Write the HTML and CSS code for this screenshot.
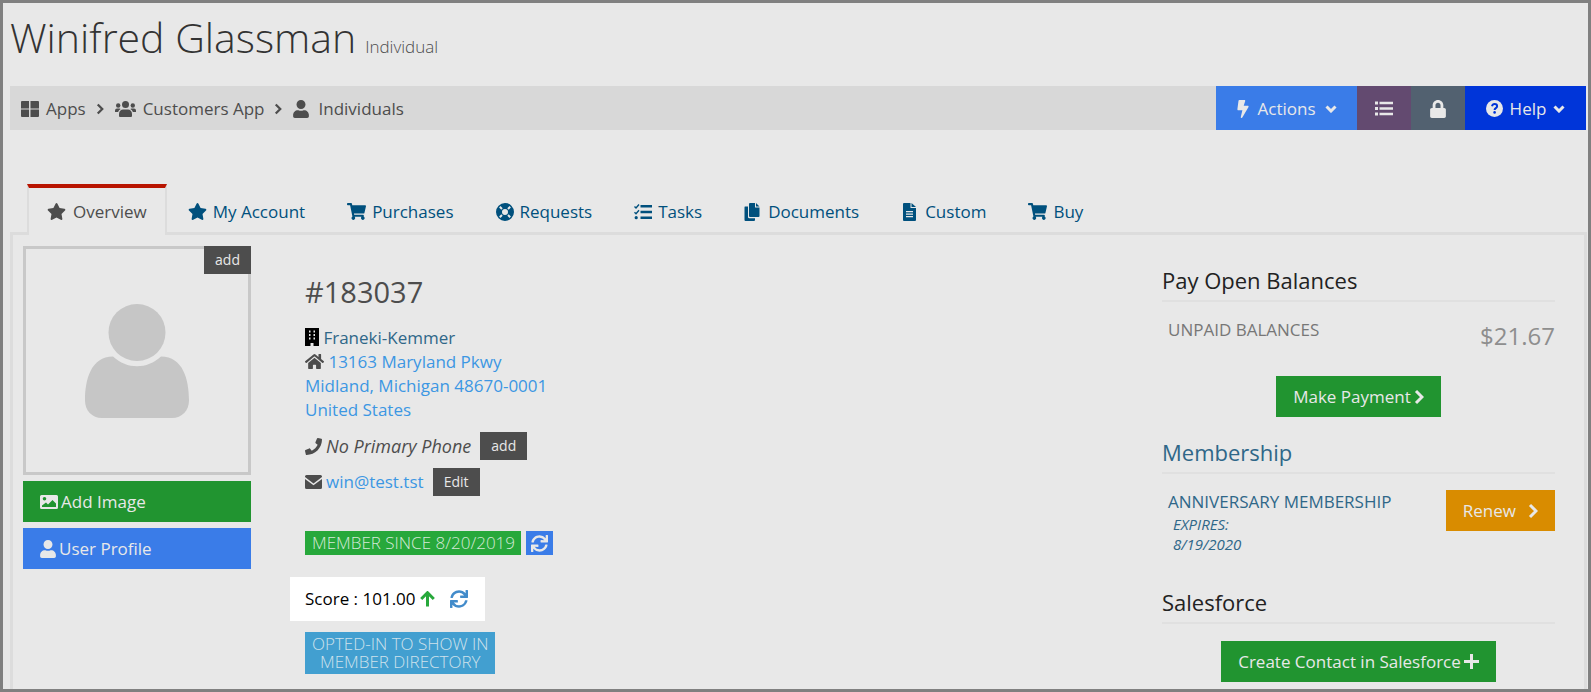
FILE: index.html
```html
<!DOCTYPE html>
<html lang="en">
<head>
  <meta charset="UTF-8">
  <meta name="viewport" content="width=device-width, initial-scale=1.0">
  <title>Winifred Glassman | Individual</title>
  <link rel="stylesheet" href="styles.css">
</head>
<body>

  <!-- icons used more than once -->
  <svg class="sprite" aria-hidden="true">
    <symbol id="star" viewBox="0 0 576 512"><path d="M259.3 17.8L194 150.2 47.9 171.5c-26.2 3.8-36.7 36.1-17.7 54.6l105.7 103-25 145.5c-4.5 26.3 23.2 46 46.4 33.7L288 439.6l130.7 68.7c23.2 12.2 50.9-7.4 46.4-33.7l-25-145.5 105.7-103c19-18.5 8.5-50.8-17.7-54.6L382 150.2 316.7 17.8c-11.7-23.6-45.6-23.9-57.4 0z"/></symbol>
    <symbol id="user" viewBox="0 0 448 512"><path d="M224 256c70.7 0 128-57.3 128-128S294.7 0 224 0 96 57.3 96 128s57.3 128 128 128zm89.6 32h-16.7c-22.2 10.2-46.9 16-72.9 16s-50.6-5.8-72.9-16h-16.7C60.2 288 0 348.2 0 422.4V464c0 26.5 21.5 48 48 48h352c26.5 0 48-21.5 48-48v-41.6c0-74.2-60.2-134.4-134.4-134.4z"/></symbol>
    <symbol id="cart" viewBox="0 0 576 512"><path d="M528.12 301.319l47.273-208C578.806 78.301 567.391 64 551.99 64H159.208l-9.166-44.81C147.758 8.021 137.93 0 126.529 0H24C10.745 0 0 10.745 0 24v16c0 13.255 10.745 24 24 24h69.883l70.248 343.435C147.325 417.1 136 435.222 136 456c0 30.928 25.072 56 56 56s56-25.072 56-56c0-15.674-6.447-29.835-16.824-40h209.647C430.447 426.165 424 440.326 424 456c0 30.928 25.072 56 56 56s56-25.072 56-56c0-22.172-12.888-41.332-31.579-50.405l5.517-24.276c3.413-15.018-8.002-29.319-23.403-29.319H218.117l-6.545-32h293.145c11.206 0 20.92-7.754 23.403-18.681z"/></symbol>
    <symbol id="sync" viewBox="0 0 512 512"><path d="M440.65 12.57l4 82.77A247.16 247.16 0 0 0 255.83 8C134.73 8 33.91 94.92 12.29 209.82A12 12 0 0 0 24.09 224h49.05a12 12 0 0 0 11.67-9.26 175.91 175.91 0 0 1 317-56.94l-101.46-4.86a12 12 0 0 0-12.57 12v47.41a12 12 0 0 0 12 12H500a12 12 0 0 0 12-12V12a12 12 0 0 0-12-12h-47.37a12 12 0 0 0-11.98 12.57zM255.83 432a175.61 175.61 0 0 1-146-77.8l101.8 4.87a12 12 0 0 0 12.57-12v-47.4a12 12 0 0 0-12-12H12a12 12 0 0 0-12 12V500a12 12 0 0 0 12 12h47.35a12 12 0 0 0 12-12.6l-4.15-82.57A247.17 247.17 0 0 0 255.83 504c121.11 0 221.93-86.92 243.55-201.82a12 12 0 0 0-11.8-14.18h-49.05a12 12 0 0 0-11.67 9.26A175.86 175.86 0 0 1 255.83 432z"/></symbol>
    <symbol id="right" viewBox="0 0 10 16"><path class="line" d="M2 2l6 6-6 6"/></symbol>
    <symbol id="down" viewBox="0 0 12 8"><path class="line" d="M1.5 1.5L6 6l4.500-4.500"/></symbol>
  </svg>

  <header class="title">
    <h1>Winifred Glassman</h1>
    <small>Individual</small>
  </header>

  <div class="topbar">
    <nav class="breadcrumb">
      <a href="#"><svg class="icon" width="18" height="16" viewBox="0 0 18 16"><path d="M0 1q0-1 1-1h7v7.500H0zM9.500 0H17q1 0 1 1v6.500H9.500zM0 8.500h8V16H1q-1 0-1-1zM9.500 8.500H18V15q0 1-1 1H9.500z"/></svg>Apps</a>
      <svg class="icon sep" width="8" height="12"><use href="#right"/></svg>
      <a href="#"><svg class="icon" width="21" height="16" viewBox="0 0 21 16"><circle cx="10.500" cy="3.500" r="3.500"/><circle cx="3.200" cy="4.500" r="2.200"/><circle cx="17.800" cy="4.500" r="2.200"/><path d="M5 16q-1 0-1-1v-2c0-3 2-4.500 4-4.500h5c2 0 4 1.500 4 4.500v2q0 1-1 1zM0 11V9.500q0-2 2-2h2.500q.8 0 1.200.4-2 1-2.600 3.100zM21 11V9.500q0-2-2-2h-2.500q-.8 0-1.200.4 2 1 2.600 3.100z"/></svg>Customers App</a>
      <svg class="icon sep" width="8" height="12"><use href="#right"/></svg>
      <a href="#" class="last"><svg class="icon" width="16" height="18"><use href="#user"/></svg>Individuals</a>
    </nav>
    <div class="toolbar">
      <button type="button" class="actions"><svg class="icon" width="12" height="18" viewBox="0 0 320 512"><path d="M296 160H180.600l42.600-129.800C227.200 15 215.700 0 200 0H56C44 0 33.800 8.900 32.200 20.800l-32 240C-1.700 275.200 9.500 288 24 288h118.700L96.600 482.500c-3.600 15.200 8 29.500 23.300 29.500 8.400 0 16.400-4.400 20.800-12l176-304c9.300-15.900-2.200-36-20.700-36z"/></svg>Actions<svg class="icon" width="12" height="8"><use href="#down"/></svg></button>
      <button type="button" class="list" aria-label="List"><svg class="icon" width="18" height="15" viewBox="0 0 18 15"><path d="M0 .5h3v3H0zM0 6h3v3H0zM0 11.500h3v3H0zM4.500.8H18v2.400H4.500zM4.500 6.300H18v2.400H4.500zM4.500 11.800H18v2.400H4.500z"/></svg></button>
      <button type="button" class="lock" aria-label="Lock"><svg class="icon" width="16" height="18" viewBox="0 0 448 512"><path d="M400 224h-24v-72C376 68.200 307.800 0 224 0S72 68.200 72 152v72H48c-26.500 0-48 21.500-48 48v192c0 26.500 21.500 48 48 48h352c26.500 0 48-21.500 48-48V272c0-26.500-21.500-48-48-48zm-104 0H152v-72c0-39.700 32.300-72 72-72s72 32.300 72 72v72z"/></svg></button>
      <button type="button" class="help"><svg class="icon" width="17" height="17" viewBox="0 0 17 17"><circle cx="8.500" cy="8.500" r="8.500"/><path d="M6 6.200C6.400 4.600 7.300 4 8.600 4c1.400 0 2.500.9 2.500 2.200 0 1.900-2.500 1.900-2.500 3.700" fill="none" stroke="#0035d9" stroke-width="2"/><circle cx="8.600" cy="12.400" r="1.300" fill="#0035d9"/></svg>Help<svg class="icon" width="12" height="8"><use href="#down"/></svg></button>
    </div>
  </div>

  <nav class="tabs">
    <a href="#" class="active"><svg class="icon" width="19" height="17"><use href="#star"/></svg>Overview</a>
    <a href="#"><svg class="icon" width="19" height="17"><use href="#star"/></svg>My Account</a>
    <a href="#"><svg class="icon" width="19" height="17"><use href="#cart"/></svg>Purchases</a>
    <a href="#"><svg class="icon" width="18" height="18" viewBox="0 0 18 18"><path fill-rule="evenodd" d="M9 0a9 9 0 1 0 0 18A9 9 0 0 0 9 0zM9 6a3 3 0 1 1 0 6 3 3 0 0 1 0-6z"/><path class="gap" d="M3.800 3.800l2.200 2.200M14.200 3.800L12 6M3.800 14.200L6 12M14.200 14.200L12 12"/></svg>Requests</a>
    <a href="#"><svg class="icon" width="18" height="16" viewBox="0 0 18 16"><path d="M6.500 1H18v2.600H6.500zM6.500 6.700H18v2.600H6.500zM6.500 12.400H18V15H6.500z"/><path d="M.5 2.500L2 4l3-3.500M.5 8.200L2 9.700l3-3.500" fill="none" stroke="currentColor" stroke-width="1.400"/><circle cx="2.200" cy="13.700" r="1.600"/></svg>Tasks</a>
    <a href="#"><svg class="icon" width="18" height="18" viewBox="0 0 18 18"><path d="M5 1q0-1 1-1h5v4.500h4.500V13q0 1-1 1H6q-1 0-1-1zM12 0l3.500 3.500H12zM1 3.500h3V14q0 1.200 1.200 1.200H11V17q0 1-1 1H1.500q-1 0-1-1V4.500q0-1 .5-1z"/></svg>Documents</a>
    <a href="#"><svg class="icon" width="18" height="18" viewBox="-2 0 18 18"><path fill-rule="evenodd" d="M0 1q0-1 1-1h6.500v5H13v12q0 1-1 1H1q-1 0-1-1zM8.500 0L13 4H8.500zM3 8v1.200h7V8zM3 10.500v1.200h7v-1.200zM3 13v1.200h7V13z"/></svg>Custom</a>
    <a href="#"><svg class="icon" width="19" height="17"><use href="#cart"/></svg>Buy</a>
  </nav>

  <main class="panel">

    <section class="photo">
      <div class="avatar">
        <svg width="104" height="114" viewBox="0 0 104 114" role="img" aria-label="No image"><circle cx="52" cy="28.500" r="28.500"/><path d="M28 52.500c14 13 34 13 48 0 22 0 28 23 28 44 0 10-7 17.500-17 17.500H17C7 114 0 106.500 0 96.500c0-21 6-44 28-44z"/></svg>
        <button type="button" class="small">add</button>
      </div>
      <button type="button" class="green"><svg class="icon" width="18" height="14" viewBox="0 0 18 14"><path fill-rule="evenodd" d="M1.500 0h15Q18 0 18 1.500v11q0 1.500-1.500 1.500h-15Q0 14 0 12.500v-11Q0 0 1.500 0zM4.500 2a1.800 1.800 0 1 0 0 3.600 1.800 1.800 0 0 0 0-3.600zM2 12h14V8.500l-3.500-3.500-4.500 4.500L6 7.500l-4 3z"/></svg>Add Image</button>
      <button type="button" class="blue"><svg class="icon" width="16" height="18"><use href="#user"/></svg>User Profile</button>
    </section>

    <section class="details">
      <h2>#183037</h2>
      <address>
        <svg class="icon black" width="14" height="18" viewBox="0 0 14 18"><path fill-rule="evenodd" d="M0 0h14v18H8.500v-3h-3v3H0zM4 2.500v2h1.500v-2zM8.500 2.500v2H10v-2zM4 6v2h1.500V6zM8.500 6v2H10V6zM4 9.500v2h1.500v-2zM8.500 9.500v2H10v-2z"/></svg>
        <a href="#" class="company">Franeki-Kemmer</a><br>
        <svg class="icon" width="19" height="17" viewBox="0 0 576 512"><path d="M280.370 148.260L96 300.110V464a16 16 0 0 0 16 16l112.060-.29a16 16 0 0 0 15.920-16V368a16 16 0 0 1 16-16h64a16 16 0 0 1 16 16v95.640a16 16 0 0 0 16 16.050L464 480a16 16 0 0 0 16-16V300L295.670 148.260a12.190 12.190 0 0 0-15.300 0zM571.600 251.470L488 182.560V44.050a12 12 0 0 0-12-12h-56a12 12 0 0 0-12 12v72.610L318.470 43a48 48 0 0 0-61 0L4.340 251.470a12 12 0 0 0-1.600 16.900l25.500 31A12 12 0 0 0 45.150 301l235.220-193.740a12.190 12.190 0 0 1 15.300 0L530.900 301a12 12 0 0 0 16.900-1.600l25.500-31a12 12 0 0 0-1.700-16.930z"/></svg>
        <a href="#">13163 Maryland Pkwy<br>Midland, Michigan 48670-0001<br>United States</a>
      </address>
      <div class="contact">
        <svg class="icon" width="17" height="17" viewBox="0 0 512 512"><path d="M493.400 24.600l-104-24c-11.300-2.600-22.900 3.300-27.500 13.900l-48 112c-4.200 9.800-1.400 21.300 6.900 28l60.600 49.600c-36 76.700-98.900 140.500-177.200 177.200l-49.600-60.600c-6.800-8.300-18.200-11.100-28-6.900l-112 48C3.900 366.500-2 378.100.6 389.400l24 104C27.100 504.200 36.700 512 48 512c256.100 0 464-207.500 464-464 0-11.200-7.700-20.900-18.600-23.400z"/></svg>
        <em>No Primary Phone</em>
        <button type="button" class="small">add</button>
      </div>
      <div class="contact">
        <svg class="icon" width="17" height="14" viewBox="0 0 17 14"><path d="M0 1.500Q0 0 1.500 0h14Q17 0 17 1.500V2L8.500 8.500 0 2zM0 4l8.500 6.300L17 4v8.500q0 1.500-1.500 1.500h-14Q0 14 0 12.500z"/></svg>
        <a href="#">win@test.tst</a>
        <button type="button" class="small">Edit</button>
      </div>
      <div class="member">
        <span class="label">MEMBER SINCE 8/20/2019</span>
        <button type="button" class="refresh" aria-label="Refresh membership"><svg class="icon" width="17" height="17"><use href="#sync"/></svg></button>
      </div>
      <div class="score">
        <span>Score : 101.00</span>
        <svg class="icon up" width="15" height="16" viewBox="0 0 15 16"><path class="line" d="M7.500 15.500V2M1.200 8l6.300-6.300L13.800 8"/></svg>
        <button type="button" aria-label="Refresh score"><svg class="icon" width="18" height="18"><use href="#sync"/></svg></button>
      </div>
      <span class="label directory">OPTED-IN TO SHOW IN<br>MEMBER DIRECTORY</span>
    </section>

    <aside class="side">
      <h3>Pay Open Balances</h3>
      <div class="row balance">
        <span>UNPAID BALANCES</span>
        <span class="amount">$21.67</span>
      </div>
      <button type="button" class="green center">Make Payment<svg class="icon" width="10" height="16"><use href="#right"/></svg></button>
      <h3><a href="#">Membership</a></h3>
      <div class="row membership">
        <a href="#">ANNIVERSARY MEMBERSHIP<em>EXPIRES:<br>8/19/2020</em></a>
        <button type="button" class="renew">Renew<svg class="icon" width="10" height="16"><use href="#right"/></svg></button>
      </div>
      <h3>Salesforce</h3>
      <button type="button" class="green center contact-btn">Create Contact in Salesforce<svg class="icon" width="15" height="15" viewBox="0 0 15 15"><path d="M6 0h3v6h6v3H9v6H6V9H0V6h6z"/></svg></button>
    </aside>

  </main>
</body>
</html>
```

FILE: styles.css
```css
*{
  box-sizing: border-box;
}

body{
  margin: 0;
  min-height: 100vh;
  display: flex;
  flex-direction: column;
  border: 3px solid #808080;
  background-color: #e8e8e8;
  color: #4d4d4d;
  font-family: 'Open Sans', sans-serif;
  font-size: 17px;
  line-height: 24px;
}

a{
  color: #3c97e3;
  text-decoration: none;
}

h1, h2, h3{
  margin: 0;
  font-weight: 400;
}

button{
  margin: 0;
  padding: 0;
  border: 0;
  background: none;
  color: #e8e8e8;
  font: inherit;
}

.sprite{
  position: absolute;
  width: 0; height: 0;
}

.icon{
  fill: currentColor;
  flex: none;
}

.line{
  fill: none;
  stroke: currentColor;
  stroke-width: 3;
}

/* title */
.title{
  display: flex;
  align-items: baseline;
  gap: 9px;
  padding: 4px 7px 0;
}

.title h1{
  font-size: 41px;
  font-weight: 300;
  line-height: 60px;
  color: #333;
}

.title small{
  font-size: 17px;
  font-weight: 300;
}

/* breadcrumb and buttons */
.topbar{
  display: flex;
  justify-content: space-between;
  height: 44px;
  margin: 19px 2px 0 7px;
  background-color: #d8d8d8;
}

.breadcrumb{
  display: flex;
  align-items: center;
  padding: 1px 0 0 11px;
}

.breadcrumb a{
  display: flex;
  align-items: center;
  gap: 7px;
  color: #4d4d4d;
}

.breadcrumb a.last{
  gap: 9px;
}

.breadcrumb .sep{
  margin: 0 11px 0 10px;
}

.toolbar{
  display: flex;
}

.toolbar button{
  display: flex;
  align-items: center;
  justify-content: center;
  gap: 9px;
  width: 54px;
  padding-top: 1px;
}

.toolbar button.actions{
  width: 141px;
  background-color: #3a7ce8;
}

.toolbar button.list{
  background-color: #634a70;
}

.toolbar button.lock{
  background-color: #526170;
}

.toolbar button.help{
  width: 121px;
  gap: 7px;
  background-color: #0035d9;
}

/* tabs */
.tabs{
  display: flex;
  margin: 54px 24px -3px;
}

.tabs a{
  display: flex;
  align-items: center;
  gap: 6px;
  height: 51px;
  padding: 0 19px;
  color: #00507d;
  border: 3px solid transparent;
  border-width: 4px 2px 0;
}

.tabs a.active{
  position: relative;
  gap: 7px;
  padding: 0 18px;
  color: #4d4d4d;
  background-color: #e8e8e8;
  border-color: #b81400 #dcdcdc;
}

.gap{
  stroke: #e8e8e8;
  stroke-width: 2;
}

/* content */
.panel{
  flex: 1;
  display: flex;
  margin: 0 1px 0 7px;
  padding: 11px 29px 6px 10px;
  border: 3px solid #dcdcdc;
  border-bottom: 0;
}

.photo{
  width: 228px;
  margin-right: 54px;
  display: flex;
  flex-direction: column;
  gap: 6px;
}

.avatar{
  position: relative;
  height: 229px;
  display: flex;
  align-items: center;
  justify-content: center;
  border: 3px solid #c8c8c8;
}

.avatar svg{
  fill: #c6c6c6;
}

.avatar .small{
  position: absolute;
  top: -3px; right: -3px;
}

.small{
  width: 47px;
  height: 28px;
  background-color: #4d4d4d;
  font-size: 14px;
}

.green, .blue, .renew{
  display: flex;
  align-items: center;
  gap: 3px;
  height: 41px;
  padding: 0 17px;
  background-color: #219430;
}

.blue{
  background-color: #3a7ce8;
}

.details{
  flex: 1;
  display: flex;
  flex-direction: column;
  align-items: flex-start;
}

.details h2{
  margin: 26px 0 14px;
  font-size: 29px;
  line-height: 40px;
}

.details address{
  font-style: normal;
}

.details address .icon{
  vertical-align: -2px;
}

.details .black{
  color: #000;
}

.details .company{
  color: #2f6788;
}

.contact{
  display: flex;
  align-items: center;
  gap: 4px;
  margin-top: 8px;
}

.details address + .contact{
  margin-top: 10px;
}

.contact em{
  font-size: 18px;
}

.contact .small{
  margin-left: 5px;
}

.member{
  display: flex;
  gap: 5px;
  margin-top: 35px;
}

.label{
  padding: 0 6px 0 7px;
  background-color: #27a83b;
  color: #d5e8d8;
  font-weight: 300;
}

.refresh{
  display: flex;
  align-items: center;
  justify-content: center;
  width: 27px;
  background-color: #3a7ce8;
}

.score{
  display: flex;
  align-items: center;
  gap: 4px;
  height: 44px;
  margin: 22px 0 11px -15px;
  padding: 0 17px 0 15px;
  background-color: #fff;
  color: #000;
}

.score .up{
  color: #27a83b;
}

.score button{
  display: flex;
  margin-left: 11px;
  color: #428bca;
}

.directory{
  padding: 3px 6px 3px 7px;
  background-color: #429fd0;
  color: #cfe2ec;
  line-height: 18px;
  text-align: center;
}

.side{
  width: 393px;
}

.side h3{
  height: 38px;
  padding-top: 2px;
  border-bottom: 2px solid #e0e0e0;
  font-size: 22px;
  line-height: 28px;
  color: #222;
}

.side h3:first-child{
  margin-top: 18px;
}

.side a{
  color: #2f6788;
}

.row{
  display: flex;
  justify-content: space-between;
  align-items: flex-start;
  padding: 16px 0 0 6px;
}

.balance{
  height: 74px;
  color: #777;
}

.amount{
  font-size: 24px;
  line-height: 36px;
  color: #8e8e8e;
}

.center{
  margin: 0 auto 19px;
}

.membership{
  height: 112px;
}

.row em{
  display: block;
  padding-left: 5px;
  font-size: 15px;
  line-height: 20px;
}

.renew{
  gap: 12px;
  background-color: #d98c00;
}

.contact-btn{
  margin: 17px auto 0;
}
```
